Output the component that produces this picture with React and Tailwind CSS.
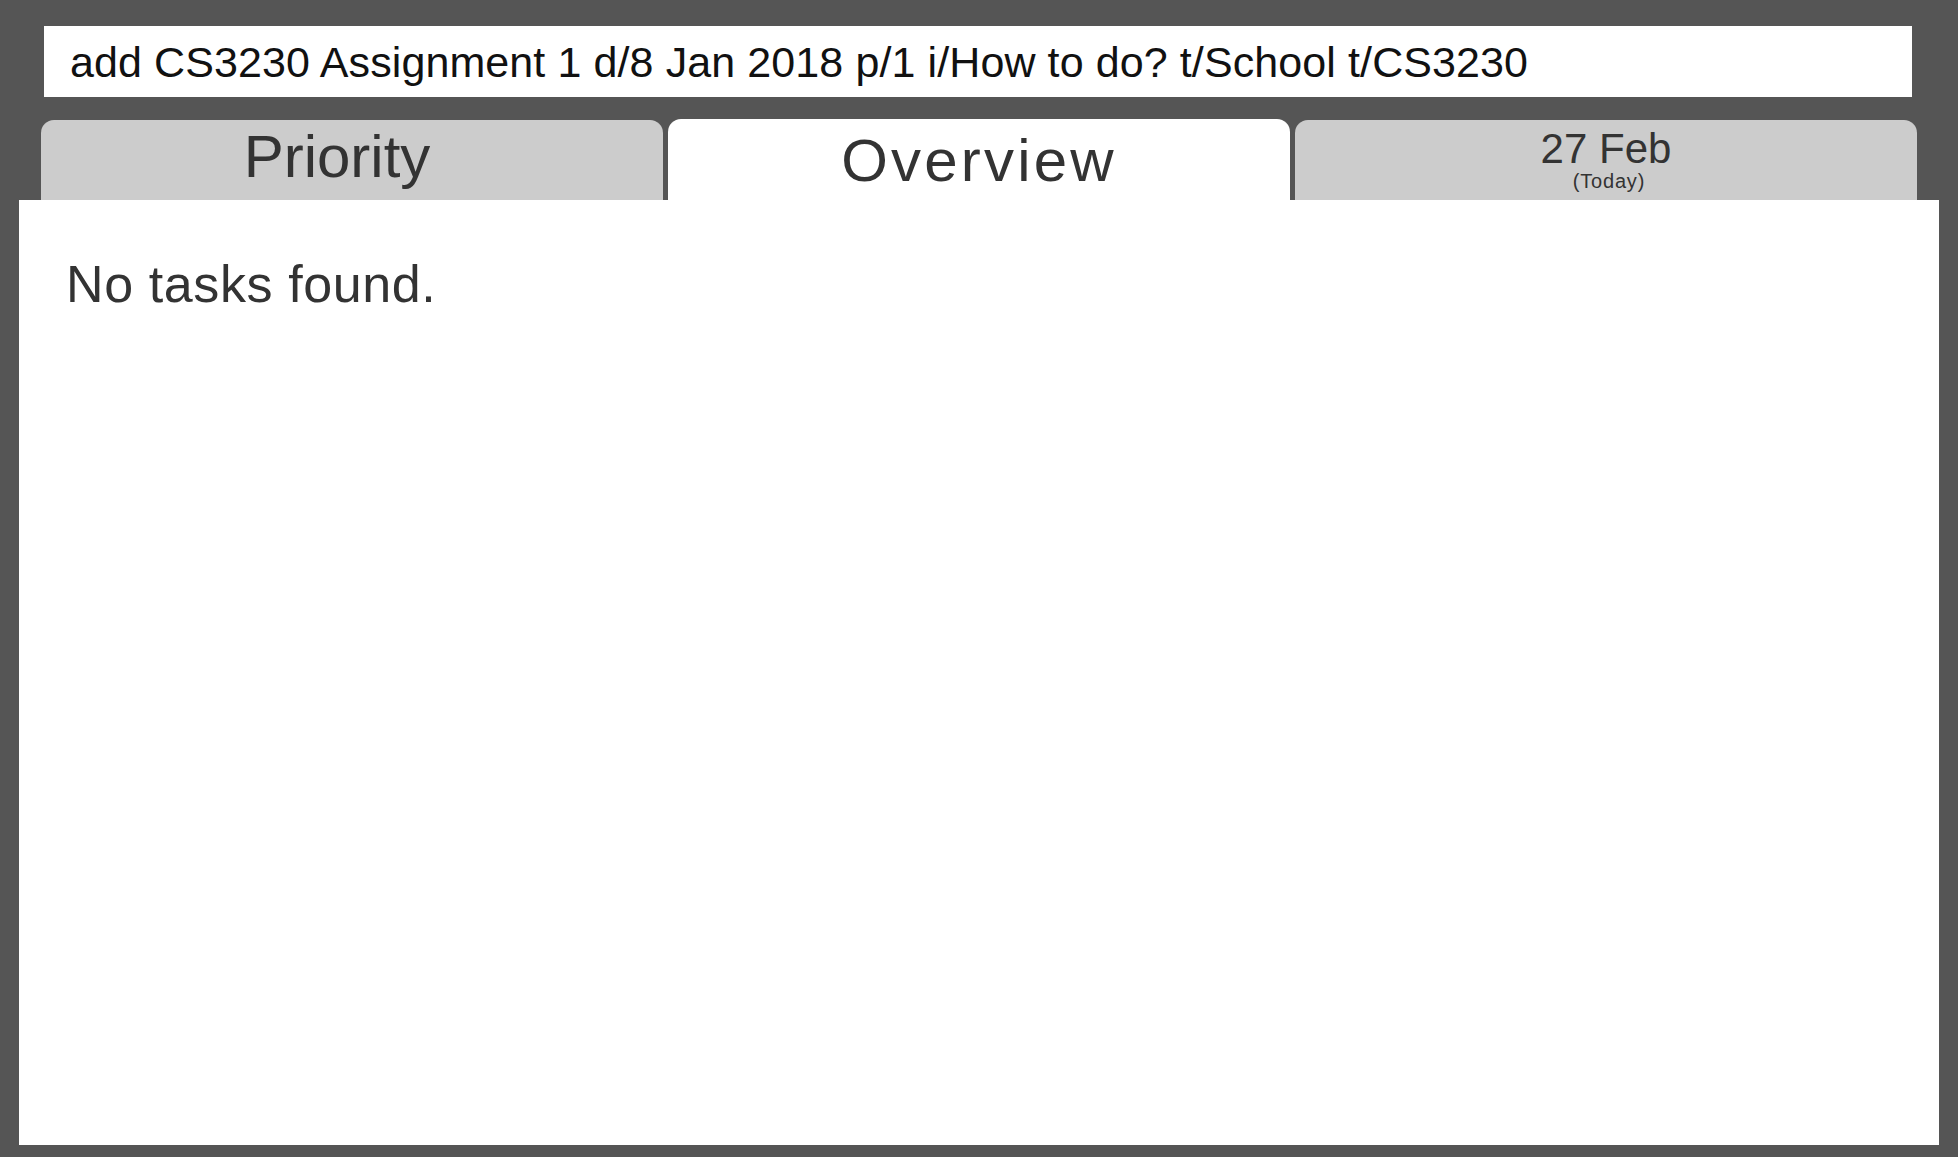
export default function App() {
  const font = { fontFamily: '"Liberation Sans", Arial, sans-serif' };
  return (
    <div className="w-full h-[1157px] bg-[#555555] flex flex-col px-[19px] pb-[12px]" style={font}>
      <div className="pt-[26px] pl-[25px] pr-[27px]">
        <div className="h-[71px] bg-white pl-[26px] pt-[15px] text-[43px] leading-none text-[#111111] whitespace-nowrap tracking-[0.1px]">
          add CS3230 Assignment 1 d/8 Jan 2018 p/1 i/How to do? t/School t/CS3230
        </div>
      </div>
      <div className="mt-[22px] px-[22px] flex items-end gap-[5px] h-[81px]">
        <div className="w-[622px] shrink-0 h-[80px] bg-[#cccccc] rounded-t-[13px] pt-[7px] pr-[30px] text-center text-[60px] leading-none text-[#333333]">
          Priority
        </div>
        <div className="w-[622px] shrink-0 h-[81px] bg-white rounded-t-[13px] pt-[12px] text-center text-[60px] leading-none text-[#333333] tracking-[3.2px]">
          Overview
        </div>
        <div className="w-[622px] shrink-0 h-[80px] bg-[#cccccc] rounded-t-[13px] pt-[8px] flex flex-col items-center text-[#333333]">
          <div className="text-[42px] leading-none">27 Feb</div>
          <div className="text-[20px] leading-none mt-[1px] pl-[6px] tracking-[0.8px]">(Today)</div>
        </div>
      </div>
      <div className="flex-1 bg-white pl-[47px] pt-[58px]">
        <div className="text-[52px] leading-none text-[#333333] tracking-[0.6px]">No tasks found.</div>
      </div>
    </div>
  );
}
